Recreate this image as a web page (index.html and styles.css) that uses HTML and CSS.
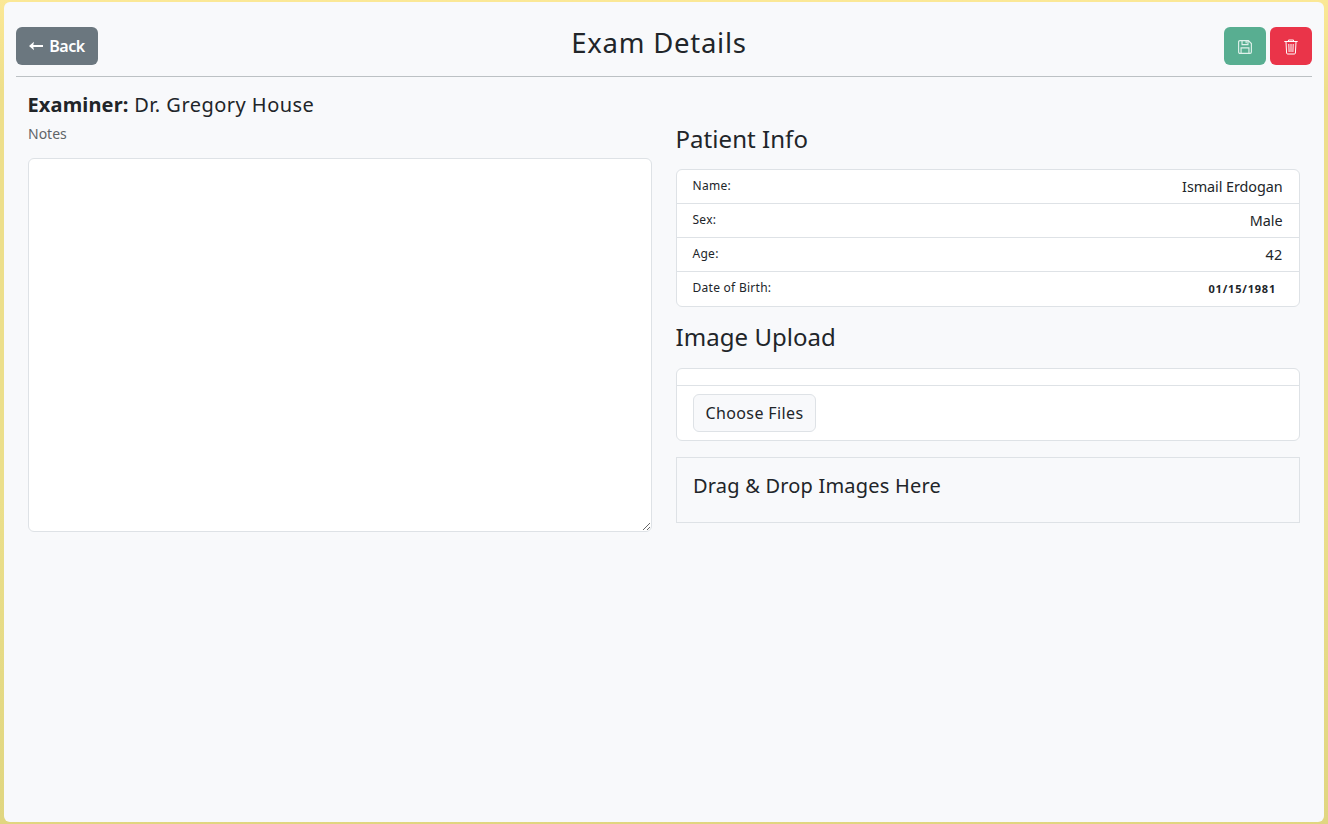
FILE: index.html
```html
<!DOCTYPE html>
<html lang="en">
<head>
<meta charset="utf-8">
<title>Exam Details</title>
<link rel="stylesheet" href="styles.css">
</head>
<body>
<main class="panel">
  <header class="header">
    <button class="btn btn-back" type="button"><svg class="arrow" viewBox="0 0 14 10"><path d="M0 5 5 .8 4.3 4H14v2H4.3L5 9.2Z"/></svg><span>Back</span></button>
    <h1 class="title">Exam Details</h1>
    <div class="actions">
      <button class="btn btn-icon btn-save" type="button" aria-label="Save"><svg viewBox="0 0 16 16" width="14" height="14"><path d="M2.2.7h9.7l3.4 3.4v9.7a1.5 1.5 0 0 1-1.5 1.5H2.200a1.5 1.5 0 0 1-1.5-1.5V2.200A1.5 1.5 0 0 1 2.200.7ZM3.500 15V9h9V15M4.600 1v4.300h6.800V1M9.300 1.500v2.300"/></svg></button>
      <button class="btn btn-icon btn-delete" type="button" aria-label="Delete"><svg viewBox="0 0 14 16" width="14" height="16"><path d="M.3 2.500h13.400M4.500 2.300V1h5v1.300M2 3l.6 11q.1 1 1 1h6.800q.9 0 1-1L12 3M4.800 5l.3 8M7 5v8M9.200 5l-.3 8"/></svg></button>
    </div>
  </header>
  <div class="columns">
    <section class="column">
      <h2 class="examiner"><b>Examiner:</b> <span>Dr. Gregory House</span></h2>
      <label class="notes-label" for="notes">Notes</label>
      <textarea class="notes" id="notes"></textarea>
    </section>
    <section class="column side">
      <h2 class="heading">Patient Info</h2>
      <ul class="list">
        <li class="row"><span class="key">Name:</span><span class="value">Ismail Erdogan</span></li>
        <li class="row"><span class="key">Sex:</span><span class="value">Male</span></li>
        <li class="row"><span class="key">Age:</span><span class="value age">42</span></li>
        <li class="row"><span class="key">Date of Birth:</span><span class="value date">01/15/1981</span></li>
      </ul>
      <h2 class="heading upload">Image Upload</h2>
      <ul class="list files">
        <li class="row row-empty"></li>
        <li class="row row-file"><button class="btn btn-file" type="button">Choose Files</button></li>
      </ul>
      <div class="drop">Drag &amp; Drop Images Here</div>
    </section>
  </div>
</main>
</body>
</html>
```
FILE: styles.css
```css
* { box-sizing: border-box; }
body {
  margin: 0;
  height: 824px;
  padding: 2px 4px;
  overflow: hidden;
  background: linear-gradient(#fbe896 0, #eedf8b 90px, #ebdf8b 500px, #e0d680 100%);
  color: #212529;
  font-family: "Noto Sans", "Open Sans", sans-serif;
}
.panel { height: 820px; padding: 25px 12px 0; border-radius: 6px; background: #f8f9fb; }
.header {
  display: grid;
  grid-template-columns: 1fr auto 1fr;
  height: 50px;
  border-bottom: 1px solid #bcc1c4;
}
.title { margin: 0; padding-right: 10px; font-size: 27.5px; line-height: 31px; font-weight: 400; letter-spacing: .75px; }
.btn { display: flex; align-items: center; justify-content: center; height: 38px; padding: 0; border: 0; border-radius: 6px; font-family: inherit; }
.btn-back { width: 82px; gap: 6px; background: #6b777f; color: #fff; font-size: 16px; font-weight: 600; letter-spacing: -.4px; }
.arrow { width: 14px; height: 10px; fill: #fff; }
.actions { display: flex; justify-content: flex-end; gap: 4px; }
.btn-icon { width: 42px; }
.btn-icon svg { fill: none; stroke: #fff; stroke-width: 1; margin-top: 2px; }
.btn-save { background: #58ae91; }
.btn-save svg { stroke: #dff1eb; stroke-width: 1.3; }
.btn-delete { background: #ea3449; }
.columns { display: grid; grid-template-columns: 1fr 1fr; gap: 24px; padding: 0 12px; }
.column { display: flex; flex-direction: column; }
.examiner { margin: 16px 0 0 -.5px; font-size: 20px; line-height: 24px; font-weight: 400; letter-spacing: .47px; white-space: nowrap; }
.examiner b { letter-spacing: .15px; }
.notes-label { margin-top: 7px; color: #5f6468; font-size: 14px; line-height: 20px; }
.notes { height: 374px; margin-top: 14px; border: 1px solid #dee2e6; border-radius: 6px; background: #fff; resize: vertical; outline: 0; }
.side { padding-top: 47px; }
.heading { margin: 0 0 0 -.5px; font-size: 24px; line-height: 29px; font-weight: 400; letter-spacing: .05px; }
.list { margin: 16px 0 0; padding: 0; list-style: none; border: 1px solid #dee2e6; border-radius: 6px; background: #fff; }
.row { display: flex; justify-content: space-between; height: 34px; padding: 0 16.5px 0 15px; border-bottom: 1px solid #dee2e6; }
.row:last-child { border-bottom: 0; }
.key { padding-left: .5px; font-size: 12px; line-height: 32px; letter-spacing: .27px; }
.value { font-size: 14.4px; line-height: 34px; letter-spacing: -.08px; }
.age { letter-spacing: .3px; }
.date { margin-right: 6.5px; font-size: 11px; font-weight: 700; letter-spacing: .8px; }
.upload { margin-top: 15px; }
.files { margin-top: 17px; }
.row-empty { height: 17px; }
.row-file:last-child { height: 54px; align-items: center; padding-left: 16px; }
.btn-file { width: 123px; border: 1px solid #dee2e6; background: #f8f9fb; color: #212529; font-size: 16px; letter-spacing: .38px; }
.drop { height: 66px; margin-top: 16px; padding: 16px; border: 1px solid #dee2e6; font-size: 20px; line-height: 24px; letter-spacing: .2px; }
```
